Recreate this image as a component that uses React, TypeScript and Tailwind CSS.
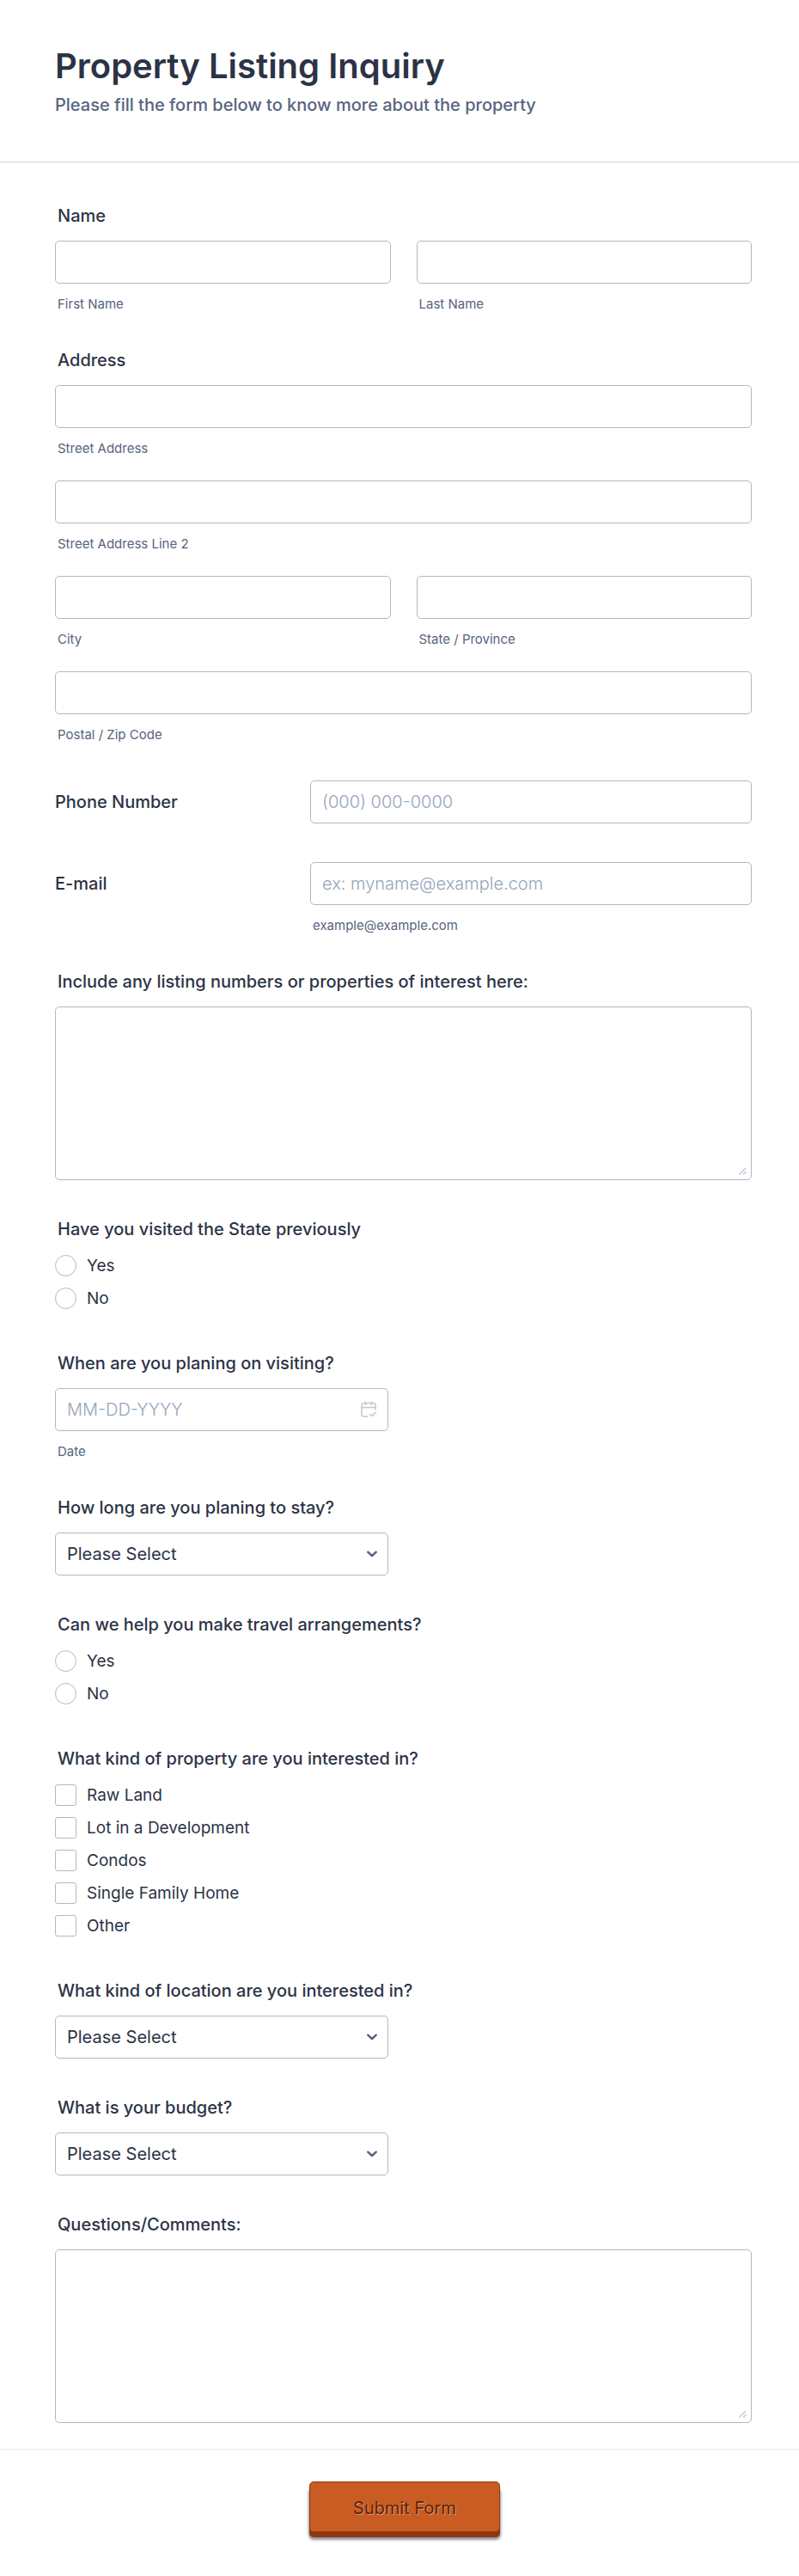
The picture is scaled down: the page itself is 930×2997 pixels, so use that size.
import { useId, type ReactNode } from 'react';

const controlClass =
  'h-[50px] w-full rounded-[5px] border border-[#b3b8c7] bg-white px-[13px] text-[20px] font-light text-[#2c3345] placeholder:text-[#95a5b8] focus:outline-none focus:ring-2 focus:ring-blue-300';
const labelClass = 'mb-[17px] block pl-[3px] text-[20px] leading-6 font-medium text-[#2c3345]';
const sublabelClass = 'mt-[15px] block pl-[3px] text-[15px] leading-[17px] text-[#57647e]';

type TextFieldProps = {
  sublabel: string;
};

const TextField = ({ sublabel }: TextFieldProps) => {
  const id = useId();
  return (
    <div>
      <input id={id} type="text" className={controlClass} />
      <label htmlFor={id} className={sublabelClass}>
        {sublabel}
      </label>
    </div>
  );
};

type InlineFieldProps = {
  label: string;
  type: string;
  placeholder: string;
  sublabel?: string;
};

const InlineField = ({ label, type, placeholder, sublabel }: InlineFieldProps) => {
  const id = useId();
  return (
    <div className="flex items-start">
      <label htmlFor={id} className="w-[297px] shrink-0 pt-[13px] text-[20px] leading-6 font-medium text-[#2c3345]">
        {label}
      </label>
      <div className="flex-1">
        <input id={id} type={type} placeholder={placeholder} className={controlClass} />
        {sublabel && <p className={sublabelClass}>{sublabel}</p>}
      </div>
    </div>
  );
};

const TextAreaField = ({ label }: { label: string }) => {
  const id = useId();
  return (
    <div>
      <label htmlFor={id} className={labelClass}>
        {label}
      </label>
      <div className="relative">
        <textarea
          id={id}
          className="block h-[202px] w-full resize-none rounded-[5px] border border-[#b3b8c7] bg-white p-3 text-[20px] font-light text-[#2c3345]"
        />
        <svg
          viewBox="0 0 9 9"
          className="pointer-events-none absolute right-1.5 bottom-1.5 size-[9px]"
          fill="none"
          stroke="#c0c4d0"
          strokeWidth="1.3"
        >
          <path d="M.5 8.500 8 1M5 8.500l3.500-3.500" />
        </svg>
      </div>
    </div>
  );
};

type SelectFieldProps = {
  label: string;
  options: string[];
};

const SelectField = ({ label, options }: SelectFieldProps) => {
  const id = useId();
  return (
    <div>
      <label htmlFor={id} className={labelClass}>
        {label}
      </label>
      <div className="relative max-w-[388px]">
        <select
          id={id}
          className="h-[50px] w-full appearance-none rounded-[5px] border border-[#b3b8c7] bg-white px-[13px] text-[20px] text-[#2c3345]"
        >
          <option>Please Select</option>
          {options.map((option) => (
            <option key={option}>{option}</option>
          ))}
        </select>
        <svg
          viewBox="0 0 12 8"
          className="pointer-events-none absolute top-[21px] right-[13px] h-2 w-3"
          fill="none"
          stroke="#57607a"
          strokeWidth="2.4"
          strokeLinecap="round"
          strokeLinejoin="round"
        >
          <path d="M1.300 1.700 6 6.200l4.700-4.500" />
        </svg>
      </div>
    </div>
  );
};

type ChoiceFieldProps = {
  label: string;
  type: 'radio' | 'checkbox';
  options: string[];
};

const ChoiceField = ({ label, type, options }: ChoiceFieldProps) => {
  const name = useId();
  return (
    <fieldset>
      <legend className={labelClass}>{label}</legend>
      <div className="flex flex-col gap-[13px] pt-px pb-1.5">
        {options.map((option) => (
          <label key={option} className="flex items-center gap-3 text-[19px] leading-[25px] text-[#2c3345]">
            <input
              type={type}
              name={name}
              value={option}
              className={
                type === 'radio'
                  ? 'size-[25px] appearance-none rounded-full border border-[#b3b8c7] checked:border-8 checked:border-blue-600'
                  : 'size-[25px] appearance-none rounded-[3px] border border-[#b3b8c7] checked:bg-blue-600'
              }
            />
            {option}
          </label>
        ))}
      </div>
    </fieldset>
  );
};

const Group = ({ label, children }: { label: string; children: ReactNode }) => (
  <fieldset>
    <legend className={labelClass}>{label}</legend>
    {children}
  </fieldset>
);

const DateField = ({ label }: { label: string }) => {
  const id = useId();
  return (
    <div>
      <label htmlFor={id} className={labelClass}>
        {label}
      </label>
      <div className="relative max-w-[388px]">
        <input id={id} type="text" placeholder="MM-DD-YYYY" className={controlClass} />
        <svg
          viewBox="0 0 18 19"
          className="pointer-events-none absolute top-[15px] right-[14px] h-[19px] w-[18px]"
          fill="none"
          stroke="#c2c6d3"
          strokeWidth="1.5"
          strokeLinecap="round"
          strokeLinejoin="round"
        >
          <path d="M17 10V4.500a2 2 0 0 0-2-2H3a2 2 0 0 0-2 2V16a2 2 0 0 0 2 2h5" />
          <path d="M1 7.500h16M5.500 1v3.500M12.500 1v3.500" />
          <path d="m11 15.500 2 2 4-4" />
        </svg>
      </div>
      <p className={sublabelClass}>Date</p>
    </div>
  );
};

const App = () => {
  return (
    <form className="bg-white font-['Inter',sans-serif] text-[#2c3345]" onSubmit={(e) => e.preventDefault()}>
      <header className="border-b border-[#d2d6e0] px-16 pt-[53px] pb-[53px]">
        <h1 className="text-[40px] leading-[48px] font-semibold">Property Listing Inquiry</h1>
        <p className="mt-[9px] text-[20px] leading-[25px] font-medium text-[#57647e]">
          Please fill the form below to know more about the property
        </p>
      </header>

      <div className="flex flex-col gap-[45px] pt-[50px] pr-[55px] pb-[30px] pl-16">
        <Group label="Name">
          <div className="grid grid-cols-2 gap-[30px]">
            <TextField sublabel="First Name" />
            <TextField sublabel="Last Name" />
          </div>
        </Group>

        <Group label="Address">
          <div className="flex flex-col gap-[29px]">
            <TextField sublabel="Street Address" />
            <TextField sublabel="Street Address Line 2" />
            <div className="grid grid-cols-2 gap-[30px]">
              <TextField sublabel="City" />
              <TextField sublabel="State / Province" />
            </div>
            <TextField sublabel="Postal / Zip Code" />
          </div>
        </Group>

        <InlineField label="Phone Number" type="tel" placeholder="(000) 000-0000" />
        <InlineField
          label="E-mail"
          type="email"
          placeholder="ex: myname@example.com"
          sublabel="example@example.com"
        />

        <TextAreaField label="Include any listing numbers or properties of interest here:" />
        <ChoiceField label="Have you visited the State previously" type="radio" options={['Yes', 'No']} />
        <DateField label="When are you planing on visiting?" />
        <SelectField label="How long are you planing to stay?" options={['A few days', 'One week', 'Longer']} />
        <ChoiceField label="Can we help you make travel arrangements?" type="radio" options={['Yes', 'No']} />
        <ChoiceField
          label="What kind of property are you interested in?"
          type="checkbox"
          options={['Raw Land', 'Lot in a Development', 'Condos', 'Single Family Home', 'Other']}
        />
        <SelectField label="What kind of location are you interested in?" options={['City', 'Suburb', 'Rural']} />
        <SelectField label="What is your budget?" options={['Under $100,000', 'Over $100,000']} />
        <TextAreaField label="Questions/Comments:" />
      </div>

      <footer className="flex justify-center border-t border-[#e9eaf2] pt-[37px] pb-[51px] pl-3">
        <button
          type="submit"
          className="h-[59px] w-[222px] rounded-[5px] border border-[#933a0e] bg-[#c85c23] pt-0.5 text-[20px] text-[#5c1f06] shadow-[0_6px_0_#8f370c,0_8px_3px_1px_rgba(40,40,80,0.5)] [text-shadow:1px_1px_0_rgba(255,255,255,0.4)]"
        >
          Submit Form
        </button>
      </footer>
    </form>
  );
};

export default App;
